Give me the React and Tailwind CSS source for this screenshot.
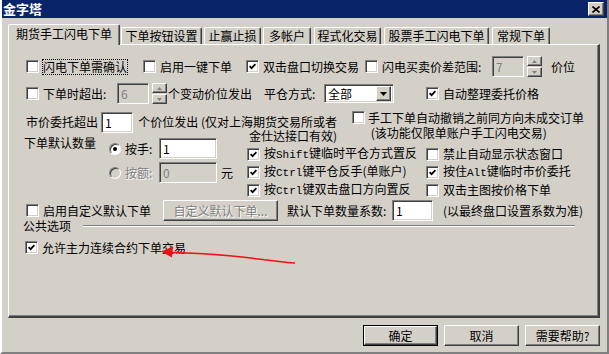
import React from "react";

const sunken =
  "border border-t-[#808080] border-l-[#808080] border-b-white border-r-white shadow-[inset_1px_1px_0_#404040,inset_-1px_-1px_0_#d4d0c8]";
const raised =
  "border border-t-white border-l-white border-b-[#404040] border-r-[#404040] shadow-[inset_-1px_-1px_0_#808080]";
const grey = "text-[#808080] [text-shadow:1px_1px_0_#fff]";

function Mono({ children }) {
  return <span className="font-['Liberation_Mono',monospace] text-[11px]">{children}</span>;
}

function Box({ checked }) {
  return (
    <span className={`flex h-[13px] w-[13px] shrink-0 items-center justify-center bg-white ${sunken}`}>
      {checked && (
        <svg width="7" height="7" viewBox="0 0 7 7">
          <path d="M0.6 3.2 L2.6 5.2 L6.4 1.2" stroke="#000" strokeWidth="1.7" fill="none" />
        </svg>
      )}
    </span>
  );
}

function Check({ checked, label, className = "", focus }) {
  return (
    <div className={`flex items-center ${className}`}>
      <Box checked={checked} />
      <span
        className={`ml-[4px] whitespace-nowrap leading-[14px] ${
          focus ? "outline-1 outline-dotted outline-black" : ""
        }`}
      >
        {label}
      </span>
    </div>
  );
}

function Radio({ checked, disabled }) {
  return (
    <span
      className={`flex h-[12px] w-[12px] shrink-0 items-center justify-center rounded-full border border-t-[#808080] border-l-[#808080] border-b-white border-r-white shadow-[inset_1px_1px_0_#404040] ${
        disabled ? "bg-[#d4d0c8]" : "bg-white"
      }`}
    >
      {checked && <span className="h-[4px] w-[4px] rounded-full bg-black" />}
    </span>
  );
}

function Field({ value, className = "", disabled }) {
  return (
    <div
      className={`flex h-[21px] shrink-0 items-center pl-[3px] ${sunken} ${
        disabled ? "bg-[#d4d0c8] text-[#808080]" : "bg-white"
      } ${className}`}
    >
      {value}
    </div>
  );
}

function Spin({ className = "" }) {
  return (
    <div className={`flex h-[21px] w-[15px] shrink-0 flex-col justify-between ${className}`}>
      <div className={`flex h-[10px] items-center justify-center bg-[#d4d0c8] ${raised}`}>
        <svg width="5" height="3" viewBox="0 0 5 3">
          <path d="M2.5 0 L5 3 L0 3Z" fill="#808080" />
        </svg>
      </div>
      <div className={`flex h-[10px] items-center justify-center bg-[#d4d0c8] ${raised}`}>
        <svg width="5" height="3" viewBox="0 0 5 3">
          <path d="M0 0 L5 0 L2.5 3Z" fill="#808080" />
        </svg>
      </div>
    </div>
  );
}

function Combo() {
  return (
    <div className={`flex h-[19px] w-[70px] shrink-0 items-center bg-white pr-[2px] ${sunken}`}>
      <span className="flex-1 pl-[3px] leading-[14px]">全部</span>
      <div className={`flex h-[15px] w-[15px] items-center justify-center bg-[#d4d0c8] ${raised}`}>
        <svg width="7" height="4" viewBox="0 0 7 4">
          <path d="M0 0 L7 0 L3.5 4Z" fill="#000" />
        </svg>
      </div>
    </div>
  );
}

function Button({ children, className = "", disabled, isDefault }) {
  const inner = (
    <div
      className={`flex h-full w-full items-center justify-center bg-[#d4d0c8] ${raised} ${
        disabled ? grey : ""
      }`}
    >
      {children}
    </div>
  );
  return (
    <div className={`shrink-0 ${isDefault ? "border border-black" : ""} ${className}`}>{inner}</div>
  );
}

const tabs = [
  { label: "下单按钮设置", cls: "ml-px w-[81px]" },
  { label: "止赢止损", cls: "ml-[2px] w-[57px]" },
  { label: "多帐户", cls: "ml-[2px] w-[48px]" },
  { label: "程式化交易", cls: "ml-[3px] w-[67px]" },
  { label: "股票手工闪电下单", cls: "ml-[3px] w-[105px]" },
  { label: "常规下单", cls: "ml-[3px] w-[58px]" },
];

export default function App() {
  return (
    <div className="relative h-[354px] w-[609px] overflow-hidden border-l-2 border-r-2 border-b-2 border-l-white border-r-[#808080] border-b-[#808080] bg-[#d4d0c8] font-['Noto_Sans_CJK_SC',sans-serif] text-[12px] leading-[14px] text-black">
      {/* title bar */}
      <div className="flex h-[18px] items-center justify-between bg-[#0a246a] pl-px pr-[3px]">
        <span className="text-[13px] font-bold leading-[16px] text-white">金字塔</span>
        <div className={`flex h-[14px] w-[16px] items-center justify-center bg-[#d4d0c8] ${raised}`}>
          <svg width="8" height="7" viewBox="0 0 8 7">
            <path d="M0.5 0.5 L7.5 6.5 M7.5 0.5 L0.5 6.5" stroke="#000" strokeWidth="1.6" />
          </svg>
        </div>
      </div>

      {/* tabs */}
      <div className="mt-[6px] flex h-[20px] items-end pl-[6px]">
        <div className="relative z-10 -mb-px flex h-[21px] w-[112px] justify-center rounded-t-[2px] border-t border-l border-r border-t-white border-l-white border-r-[#404040] bg-[#d4d0c8] pt-[2px] shadow-[inset_-1px_0_0_#808080]">
          期货手工闪电下单
        </div>
        {tabs.map((t) => (
          <div
            key={t.label}
            className={`flex h-[17px] justify-center rounded-t-[2px] border-t border-l border-r border-t-white border-l-white border-r-[#404040] pt-[1px] shadow-[inset_-1px_0_0_#808080] ${t.cls}`}
          >
            {t.label}
          </div>
        ))}
      </div>

      {/* panel */}
      <div className="ml-[6px] h-[274px] w-[592px] border-t border-l border-r-2 border-b-2 border-t-white border-l-white border-r-[#404040] border-b-[#404040] shadow-[inset_-1px_-1px_0_#808080]">
        {/* row 1 */}
        <div className="mt-[11px] flex h-[21px] items-center pl-[17px]">
          <Check focus label="闪电下单需确认" className="w-[117px]" />
          <Check label="启用一键下单" className="w-[103px]" />
          <Check checked label="双击盘口切换交易" className="w-[119px]" />
          <Check label="闪电买卖价差范围:" className="w-[127px]" />
          <Field disabled value="7" className="w-[32px]" />
          <Spin className="ml-[3px]" />
          <span className="ml-[9px]">价位</span>
        </div>

        {/* row 2 */}
        <div className="mt-[6px] flex h-[21px] items-center pl-[17px]">
          <Check label="下单时超出:" className="w-[91px]" />
          <Field disabled value="6" className="w-[32px]" />
          <Spin className="ml-[3px]" />
          <span className="ml-px w-[96px]">个变动价位发出</span>
          <span className="w-[60px]">平仓方式:</span>
          <Combo />
          <Check checked label="自动整理委托价格" className="ml-[32px]" />
        </div>

        {/* row 3 */}
        <div className="mt-[8px] flex h-[26px] items-start pl-[17px]">
          <div className="flex w-[326px] shrink-0 items-start">
            <span className="mt-[3px] w-[75px] shrink-0">市价委托超出</span>
            <Field value="1" className="w-[32px]" />
            <div className="ml-[4px] mt-[3px] w-[200px] shrink-0 whitespace-nowrap text-right">
              个价位发出 (仅对上海期货交易所或者
              <br />
              金仕达接口有效)
            </div>
          </div>
          <div className="-mt-px flex items-start">
            <Box />
            <div className="-mt-[1px] ml-[3px] whitespace-nowrap leading-[15px]">
              手工下单自动撤销之前同方向未成交订单
              <br />
              &nbsp;(该功能仅限单账户手工闪电交易)
            </div>
          </div>
        </div>

        {/* row 4 */}
        <div className="flex h-[62px] pl-[15px]">
          <span className="-mt-[2px] w-[85px] shrink-0">下单默认数量</span>
          <div className="flex w-[138px] shrink-0 flex-col">
            <div className="flex h-[21px] items-center">
              <Radio checked />
              <span className="ml-[4px] w-[34px]">按手:</span>
              <Field value="1" className="w-[58px]" />
            </div>
            <div className="mt-[3px] flex h-[21px] items-center">
              <Radio disabled />
              <span className={`ml-[4px] w-[34px] ${grey}`}>按额:</span>
              <Field disabled value="0" className="w-[58px]" />
              <span className="ml-[4px]">元</span>
            </div>
          </div>
          <div className="mt-[7px] flex w-[179px] shrink-0 flex-col">
            <Check
              checked
              className="h-[18px]"
              label={
                <>
                  按<Mono>Shift</Mono>键临时平仓方式置反
                </>
              }
            />
            <Check
              checked
              className="h-[18px]"
              label={
                <>
                  按<Mono>Ctrl</Mono>键平仓反手(单账户)
                </>
              }
            />
            <Check
              checked
              className="h-[18px]"
              label={
                <>
                  按<Mono>Ctrl</Mono>键双击盘口方向置反
                </>
              }
            />
          </div>
          <div className="mt-[7px] flex flex-col">
            <Check className="h-[18px]" label="禁止自动显示状态窗口" />
            <Check
              checked
              className="h-[18px]"
              label={
                <>
                  按住<Mono>Alt</Mono>键临时市价委托
                </>
              }
            />
            <Check className="h-[18px]" label="双击主图按价格下单" />
          </div>
        </div>

        {/* row 5 */}
        <div className="flex h-[21px] items-center pl-[17px]">
          <Check label="启用自定义默认下单" className="w-[137px]" />
          <Button disabled className="h-[21px] w-[115px]">
            自定义默认下单...
          </Button>
          <span className="ml-[9px] w-[105px]">默认下单数量系数:</span>
          <Field value="1" className="w-[41px]" />
          <span className="ml-[10px]">(以最终盘口设置系数为准)</span>
        </div>

        {/* group */}
        <div className="-mt-[2px] flex h-[14px] items-center pl-[14px] pr-[23px]">
          <span>公共选项</span>
          <div className="ml-[12px] h-[2px] flex-1 border-t border-b border-t-[#808080] border-b-white" />
        </div>
        <div className="mt-[7px] flex h-[15px] items-center pl-[16px]">
          <Check checked label="允许主力连续合约下单交易" />
        </div>
      </div>

      {/* buttons */}
      <div className="ml-[6px] mt-[7px] flex w-[592px] justify-end gap-[6px]">
        <Button isDefault className="h-[21px] w-[75px]">
          确定
        </Button>
        <Button className="h-[21px] w-[75px]">取消</Button>
        <Button className="h-[21px] w-[75px]">需要帮助?</Button>
      </div>

      {/* red annotation arrow */}
      <svg
        className="pointer-events-none absolute left-0 top-0"
        width="609"
        height="354"
        viewBox="0 0 609 354"
      >
        <path
          d="M293 263 C 270 261, 250 258, 230 256 C 210 254, 190 253, 169 252.5"
          stroke="#ee1111"
          strokeWidth="1.5"
          fill="none"
        />
        <path d="M159 251.5 L171 246.5 L170 257.5Z" fill="#ee1111" />
      </svg>
    </div>
  );
}
